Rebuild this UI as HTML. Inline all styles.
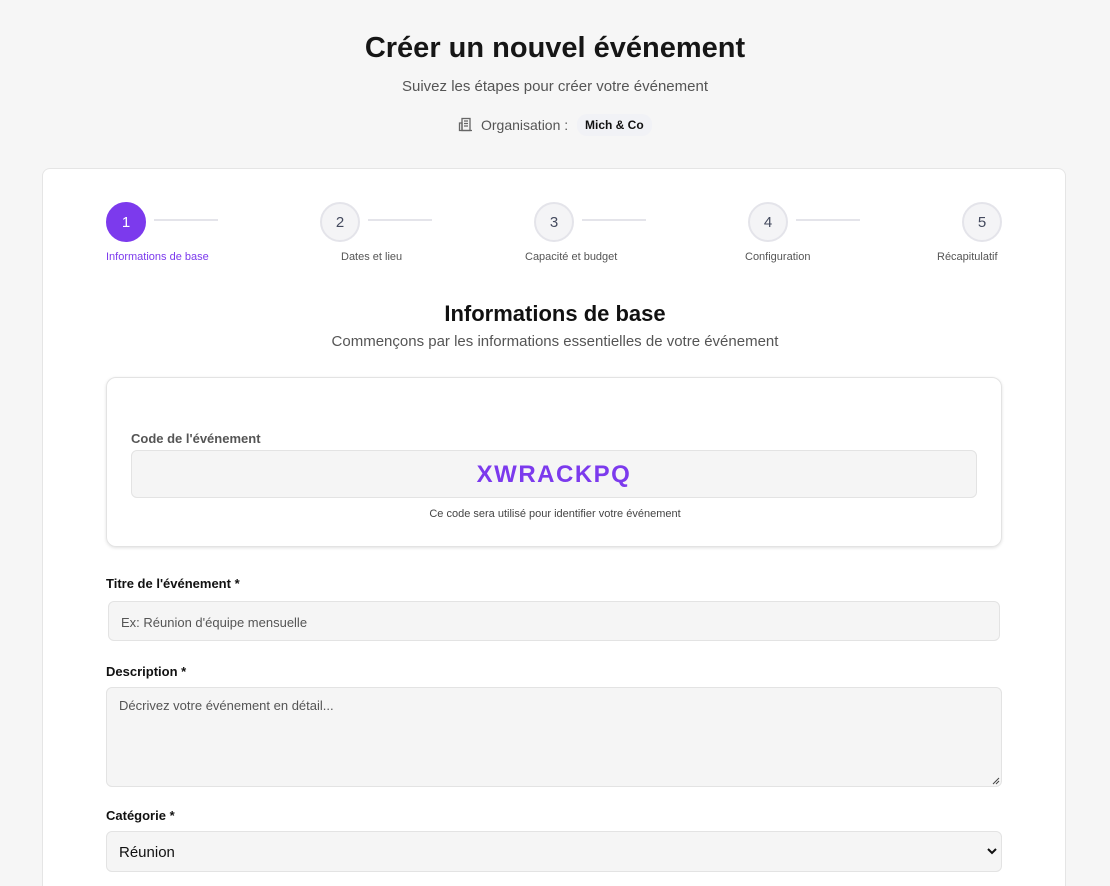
<!DOCTYPE html>
<html><head><meta charset="utf-8"><style>
*{box-sizing:border-box;margin:0;padding:0}
html,body{width:1110px;height:886px;overflow:hidden}
body{background:#f6f6f6;font-family:"Liberation Sans",sans-serif;color:#111;position:relative}
.a{position:absolute}
h1{position:absolute;top:32px;left:0;width:1110px;text-align:center;font-size:29px;font-weight:bold;color:#161616}
.card{position:absolute;left:42px;top:168px;width:1024px;height:718px;background:#fff;border:1px solid #e5e5e5;border-bottom:none;border-radius:8px 8px 0 0}
.c{position:absolute;top:202px;width:40px;height:40px;border-radius:50%;background:#f4f4f6;border:2px solid #e4e4ea;color:#444a5e;font-size:15px;display:flex;align-items:center;justify-content:center}
.ln{position:absolute;top:219px;height:2px;width:64px;background:#e4e4ea}
.lb{position:absolute;top:251px;font-size:11px;color:#555}
.lab{position:absolute;left:106px;font-size:13px;font-weight:bold;color:#111}
.inp{position:absolute;left:106px;width:896px;background:#f5f5f5;border:1px solid #e3e3e3;border-radius:6px;font-size:13px;color:#555}
</style></head><body>
<h1>Créer un nouvel événement</h1>
<div class="a" style="top:78px;width:1110px;text-align:center;font-size:15px;color:#555">Suivez les étapes pour créer votre événement</div>
<svg class="a" style="left:458px;top:117px" width="15" height="15" viewBox="0 0 15 15" fill="none" stroke="#666" stroke-width="1.3"><rect x="4" y="1.5" width="8" height="12"/><path d="M1.5 6h2.5v7.5H1.5zM6 4h4M6 6.5h4M6 9h4M1 13.5h13"/></svg>
<div class="a" style="left:481px;top:117px;font-size:14px;color:#555">Organisation :</div>
<div class="a" style="left:577px;top:114px;padding:4px 8px;background:#f1f2f6;border-radius:10px;font-size:12px;font-weight:bold;color:#111">Mich &amp; Co</div>
<div class="card"></div>
<div class="c" style="left:106px;background:#7c3aed;border-color:#7c3aed;color:#fff">1</div>
<div class="c" style="left:320px">2</div>
<div class="c" style="left:534px">3</div>
<div class="c" style="left:748px">4</div>
<div class="c" style="left:962px">5</div>
<div class="ln" style="left:154px"></div><div class="ln" style="left:368px"></div><div class="ln" style="left:582px"></div><div class="ln" style="left:796px"></div>
<div class="lb" style="left:106px;color:#7c3aed">Informations de base</div>
<div class="lb" style="left:341px">Dates et lieu</div>
<div class="lb" style="left:525px">Capacité et budget</div>
<div class="lb" style="left:745px">Configuration</div>
<div class="lb" style="left:937px">Récapitulatif</div>
<div class="a" style="top:301px;width:1110px;text-align:center;font-size:22px;font-weight:bold">Informations de base</div>
<div class="a" style="top:333px;width:1110px;text-align:center;font-size:15px;color:#555">Commençons par les informations essentielles de votre événement</div>
<div class="a" style="left:106px;top:377px;width:896px;height:170px;border:1px solid #e3e3e3;border-radius:10px;box-shadow:0 1px 3px rgba(0,0,0,.12)"></div>
<div class="a" style="left:131px;top:431px;font-size:13px;font-weight:bold;color:#555">Code de l'événement</div>
<div class="a" style="left:131px;top:450px;width:846px;height:48px;background:#f5f5f5;border:1px solid #e3e3e3;border-radius:6px;text-align:center;line-height:48px;font-size:24px;font-weight:900;color:#7c3aed;letter-spacing:1.5px">XWRACKPQ</div>
<div class="a" style="left:0;top:508px;width:1110px;text-align:center;font-size:11px;color:#444">Ce code sera utilisé pour identifier votre événement</div>
<div class="lab" style="top:576px">Titre de l'événement *</div>
<div class="inp" style="top:601px;left:108px;width:892px;height:40px;padding:13px 12px">Ex: Réunion d'équipe mensuelle</div>
<div class="lab" style="top:664px">Description *</div>
<div class="inp" style="top:687px;height:100px;padding:10px 12px">Décrivez votre événement en détail...</div>
<svg class="a" style="left:992px;top:777px" width="8" height="8"><path d="M1 7L7 1M4 7L7 4" stroke="#444" stroke-width="1"/></svg>
<div class="lab" style="top:808px">Catégorie *</div>
<div class="inp" style="top:831px;height:41px;padding:12px 12px;font-size:15px;color:#111">Réunion</div>
<svg class="a" style="left:987px;top:847px" width="10" height="8"><path d="M1 2l4 4 4-4" stroke="#111" stroke-width="2" fill="none"/></svg>
</body></html>
